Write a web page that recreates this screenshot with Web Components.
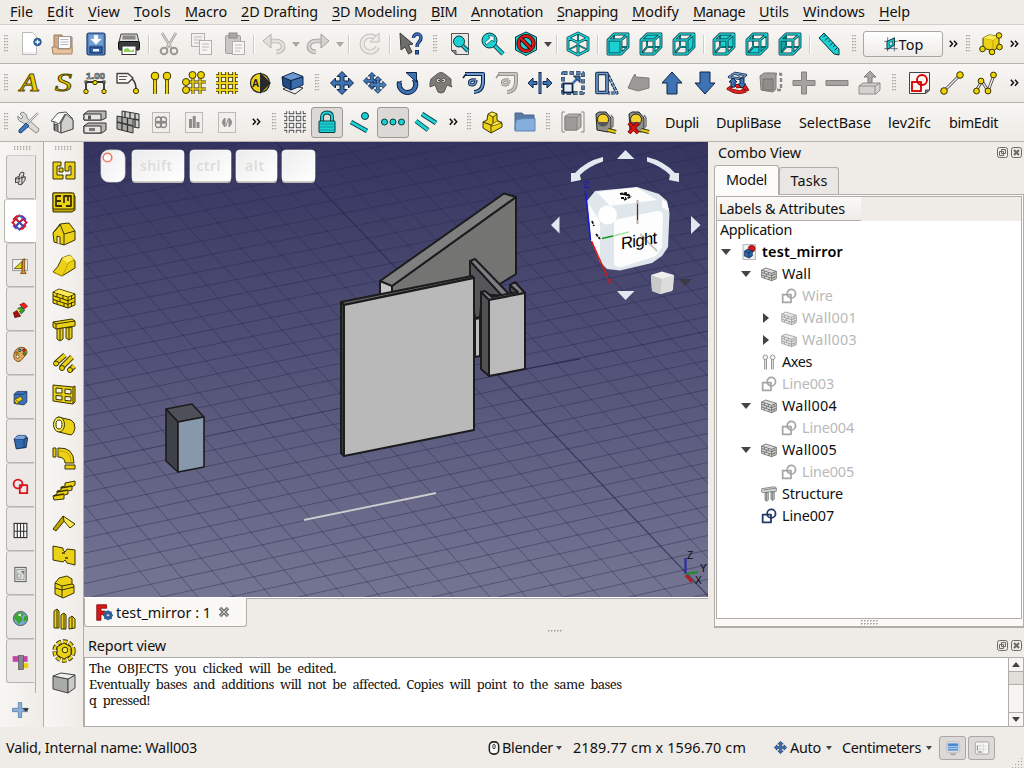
<!DOCTYPE html>
<html lang="en">
<head>
<meta charset="utf-8">
<title>FreeCAD</title>
<style>
html,body{margin:0;padding:0;width:1024px;height:768px;overflow:hidden}
body{font:14.4px "Noto Sans","Open Sans",sans-serif;color:#111;background:#efebe7}
u{text-decoration:underline;text-decoration-thickness:1px;text-underline-offset:3px}
</style>
</head>
<body>
<fc-window>
  <fc-menubar slot="menu">
    <fc-text w="23"><u>F</u>ile</fc-text><fc-text w="27"><u>E</u>dit</fc-text><fc-text w="32"><u>V</u>iew</fc-text><fc-text w="37"><u>T</u>ools</fc-text><fc-text w="42"><u>M</u>acro</fc-text><fc-text w="77"><u>2</u>D Drafting</fc-text><fc-text w="85"><u>3</u>D Modeling</fc-text><fc-text w="26"><u>B</u>IM</fc-text><fc-text w="72"><u>A</u>nnotation</fc-text><fc-text w="61"><u>S</u>napping</fc-text><fc-text w="47"><u>M</u>odify</fc-text><fc-text w="52"><u>M</u>anage</fc-text><fc-text w="30"><u>U</u>tils</fc-text><fc-text w="62"><u>W</u>indows</fc-text><fc-text w="31"><u>H</u>elp</fc-text>
  </fc-menubar>
  <fc-toolbar slot="tools">
    <fc-grip w="13"></fc-grip><fc-tool i="new"></fc-tool><fc-tool i="open"></fc-tool><fc-tool i="save"></fc-tool><fc-tool i="print"></fc-tool><fc-sep w="7"></fc-sep><fc-tool i="cut"></fc-tool><fc-tool i="copy"></fc-tool><fc-tool i="paste"></fc-tool><fc-sep w="6"></fc-sep><fc-tool i="undo"></fc-tool><fc-drop w="11" c="#aaa8a5"></fc-drop><fc-tool i="redo"></fc-tool><fc-drop w="11" c="#aaa8a5"></fc-drop><fc-sep w="8"></fc-sep><fc-tool i="refresh"></fc-tool><fc-sep w="8"></fc-sep><fc-tool i="whats"></fc-tool><fc-grip w="16"></fc-grip><fc-tool i="fit"></fc-tool><fc-tool i="zoomsel"></fc-tool><fc-tool i="nodraw"></fc-tool><fc-drop w="11" c="#444"></fc-drop><fc-sep w="8"></fc-sep><fc-tool i="iso"></fc-tool><fc-sep w="7"></fc-sep><fc-tool i="vfront"></fc-tool><fc-tool i="vtop"></fc-tool><fc-tool i="vright"></fc-tool><fc-sep w="7"></fc-sep><fc-tool i="vrear"></fc-tool><fc-tool i="vbottom"></fc-tool><fc-tool i="vleft"></fc-tool><fc-sep w="7"></fc-sep><fc-tool i="ruler"></fc-tool><fc-grip w="17"></fc-grip><fc-button><fc-icon i="plane" s="16"></fc-icon><fc-text w="25">Top</fc-text></fc-button><fc-more w="20"></fc-more><fc-grip w="11"></fc-grip><fc-tool i="ycube"></fc-tool><fc-more w="14"></fc-more>
  </fc-toolbar>
  <fc-toolbar slot="tools">
    <fc-grip w="12"></fc-grip><fc-tool i="text"></fc-tool><fc-tool i="shapes"></fc-tool><fc-tool i="dim"></fc-tool><fc-tool i="leader"></fc-tool><fc-tool i="axes"></fc-tool><fc-tool i="axsys"></fc-tool><fc-tool i="ygrid"></fc-tool><fc-tool i="section"></fc-tool><fc-tool i="layer"></fc-tool><fc-grip w="16"></fc-grip><fc-tool i="move"></fc-tool><fc-tool i="copymove"></fc-tool><fc-tool i="rotate"></fc-tool><fc-tool i="sheep"></fc-tool><fc-tool i="offset"></fc-tool><fc-tool i="offset2"></fc-tool><fc-tool i="trimex"></fc-tool><fc-tool i="scale"></fc-tool><fc-tool i="stretch"></fc-tool><fc-tool i="blob"></fc-tool><fc-tool i="up"></fc-tool><fc-tool i="down"></fc-tool><fc-tool i="draft2sk"></fc-tool><fc-tool i="compound"></fc-tool><fc-tool i="plus"></fc-tool><fc-tool i="minus"></fc-tool><fc-tool i="extrude"></fc-tool><fc-grip w="16"></fc-grip><fc-tool i="sketch"></fc-tool><fc-tool i="line"></fc-tool><fc-tool i="wire"></fc-tool><fc-more w="26"></fc-more>
  </fc-toolbar>
  <fc-toolbar slot="tools">
    <fc-grip w="12"></fc-grip><fc-tool i="wrench"></fc-tool><fc-tool i="house"></fc-tool><fc-tool i="levels"></fc-tool><fc-tool i="windows"></fc-tool><fc-tool i="doc1"></fc-tool><fc-tool i="doc2"></fc-tool><fc-tool i="doc3"></fc-tool><fc-more w="27"></fc-more><fc-grip w="8"></fc-grip><fc-tool i="ggrid"></fc-tool><fc-tool i="lock" on></fc-tool><fc-tool i="snapnear"></fc-tool><fc-tool i="snapext" on></fc-tool><fc-tool i="snappar"></fc-tool><fc-more w="21"></fc-more><fc-grip w="11"></fc-grip><fc-tool i="lparts"></fc-tool><fc-tool i="folder"></fc-tool><fc-grip w="15"></fc-grip><fc-tool i="selbox"></fc-tool><fc-tool i="tape"></fc-tool><fc-tool i="tapex"></fc-tool><fc-space w="10"></fc-space><fc-text w="34">Dupli</fc-text><fc-space w="17"></fc-space><fc-text w="65">DupliBase</fc-text><fc-space w="18"></fc-space><fc-text w="72">SelectBase</fc-text><fc-space w="17"></fc-space><fc-text w="43">lev2ifc</fc-text><fc-space w="18"></fc-space><fc-text w="49">bimEdit</fc-text>
  </fc-toolbar>
  <fc-workbenches slot="left">
    <fc-wtab i="ww"></fc-wtab><fc-wtab i="wbim" on></fc-wtab><fc-wtab i="wdraft"></fc-wtab><fc-wtab i="wimg"></fc-wtab><fc-wtab i="wpal"></fc-wtab><fc-wtab i="wpart"></fc-wtab><fc-wtab i="wpd"></fc-wtab><fc-wtab i="wsk"></fc-wtab><fc-wtab i="wss"></fc-wtab><fc-wtab i="wtd"></fc-wtab><fc-wtab i="wweb"></fc-wtab><fc-wtab i="wclip"></fc-wtab>
  </fc-workbenches>
  <fc-vtoolbar slot="left">
    <fc-icon i="a1"></fc-icon><fc-icon i="a2"></fc-icon><fc-icon i="a3"></fc-icon><fc-icon i="a4"></fc-icon><fc-icon i="a5"></fc-icon><fc-icon i="a6"></fc-icon><fc-icon i="a7"></fc-icon><fc-icon i="a8"></fc-icon><fc-icon i="a9"></fc-icon><fc-icon i="a10"></fc-icon><fc-icon i="a11"></fc-icon><fc-icon i="a12"></fc-icon><fc-icon i="a13"></fc-icon><fc-icon i="a14"></fc-icon><fc-icon i="a15"></fc-icon><fc-icon i="a16"></fc-icon><fc-icon i="a17"></fc-icon>
  </fc-vtoolbar>
  <fc-viewport slot="view"></fc-viewport>
  <fc-doctabs slot="view"><fc-icon i="app" s="17"></fc-icon><fc-text w="95">test_mirror : 1</fc-text><fc-icon i="x" s="12"></fc-icon></fc-doctabs>
  <fc-combo slot="combo">
    <fc-row ind="4" style="height:21px;top:0"><fc-text w="72">Application</fc-text></fc-row>
    <fc-row ind="4" arrow="down" i="tdoc" bold><fc-text w="81">test_mirror</fc-text></fc-row>
    <fc-row ind="24" arrow="down" i="twall"><fc-text w="29">Wall</fc-text></fc-row>
    <fc-row ind="44" i="twire" dim><fc-text w="31">Wire</fc-text></fc-row>
    <fc-row ind="44" arrow="right" i="twall" dim><fc-text w="55">Wall001</fc-text></fc-row>
    <fc-row ind="44" arrow="right" i="twall" dim><fc-text w="55">Wall003</fc-text></fc-row>
    <fc-row ind="24" i="taxes"><fc-text w="30">Axes</fc-text></fc-row>
    <fc-row ind="24" i="twire" dim><fc-text w="52">Line003</fc-text></fc-row>
    <fc-row ind="24" arrow="down" i="twall"><fc-text w="55">Wall004</fc-text></fc-row>
    <fc-row ind="44" i="twire" dim><fc-text w="52">Line004</fc-text></fc-row>
    <fc-row ind="24" arrow="down" i="twall"><fc-text w="55">Wall005</fc-text></fc-row>
    <fc-row ind="44" i="twire" dim><fc-text w="52">Line005</fc-text></fc-row>
    <fc-row ind="24" i="tstruct"><fc-text w="61">Structure</fc-text></fc-row>
    <fc-row ind="24" i="twireb"><fc-text w="52">Line007</fc-text></fc-row>
  </fc-combo>
  <fc-report slot="report">
    <fc-text w="247">The OBJECTS you clicked will be edited.</fc-text>
    <fc-text w="532">Eventually bases and additions will not be affected. Copies will point to the same bases</fc-text>
    <fc-text w="61">q pressed!</fc-text>
  </fc-report>
  <fc-status slot="status">
    <fc-text w="191">Valid, Internal name: Wall003</fc-text><fc-space w="290"></fc-space><fc-icon i="mouse" s="14"></fc-icon><fc-space w="1"></fc-space><fc-text w="51">Blender</fc-text><fc-drop w="12" c="#444" small></fc-drop><fc-space w="8"></fc-space><fc-text w="173">2189.77 cm x 1596.70 cm</fc-text><fc-space w="28"></fc-space><fc-icon i="move" s="13"></fc-icon><fc-space w="3"></fc-space><fc-text w="31">Auto</fc-text><fc-drop w="16" c="#444" small></fc-drop><fc-space w="5"></fc-space><fc-text w="79">Centimeters</fc-text><fc-drop w="16" c="#444" small></fc-drop><fc-space w="2"></fc-space><fc-sbtn i="sb1"></fc-sbtn><fc-sbtn i="sb2"></fc-sbtn>
  </fc-status>
</fc-window>
<script>
/* ---------- icon library (24 x 24 grid) ---------- */
const P=(d,f='none',s='none',w=1,x='')=>`<path d="${d}" fill="${f}" stroke="${s}" stroke-width="${w}" stroke-linejoin="round" ${x}/>`;
const C=(x,y,r,f='#edd400',s='#3a3300',w=1)=>`<circle cx="${x}" cy="${y}" r="${r}" fill="${f}" stroke="${s}" stroke-width="${w}"/>`;
const R=(x,y,w,h,f,s='none',k=1,rx=0)=>`<rect x="${x}" y="${y}" width="${w}" height="${h}" rx="${rx}" fill="${f}" stroke="${s}" stroke-width="${k}"/>`;
const T=(x,y,t,z,st,l)=>`<text x="${x}" y="${y}" font-size="${z}" style="${st}"${l?` textLength="${l}" lengthAdjust="spacingAndGlyphs"`:''}>${t}</text>`;
const Y='#ecd217',YL='#fcea55',YD='#c0a400',K='#3a3300',TE='#1cd0d4',TK='#08363a',B='#3d72b4',BK='#0e2546';
const rod=(d,o,i,a=3.6,b=1.8)=>P(d,'none',o,a)+P(d,'none',i,b);
const near='M2 8H15V22H2ZM2 8 8 2H22V15L15 22M15 8 22 2',far='M8 2V15H22M8 15 2 22';
const rodN=rod(near,TK,TE,2.8,1.3),rodF=rod(far,TK,TE,2,.8);
const vn=f=>rodF+f+rodN, vf=f=>f+rodF+rodN;
const arrows='M12 .5 17 5.500H14V10H18.500V7L23.500 12 18.500 17V14H14V18.500H17L12 23.500 7 18.500H10V14H5.500V17L.5 12 5.500 7V10H10V5.500H7Z';
const doc=(g)=>R(3.5,2.5,17,20,'#f1efec','#bdbab6')+g;
const wall=(f,k)=>P('M1 6 7 3 23 8V19L16 22 1 17Z',f,k)+P('M1 6 16 11 23 8M16 11V22M1 9.700 16 14.700 23 11.700M1 13.400 16 18.400 23 15.400M5 7.500V11M11 9.500V13M8 12.200V15.600M5 15V18M12 17V20.500M19.500 10V13M19.500 16V20','none',k);
const tape='<g>'+P('M2 4 5 2H12L17 8V20L14 22 3 20Z','#8d8f8b','#222')+C(9,9.5,5.5,'#f2d22b','#222')+P('M3.600 12A5.500 5.500 0 0 0 14.400 12Z','#555')+P('M17 5 19 8V16L17 18','none','#777',1.5)+rod('M14 20 22 22','#3a3300','#ecd217',4,2)+'</g>';
const wsk=(k,w=2)=>P('M2.500 10H15V21.500H2.500Z','none',k,w)+`<circle cx="15.500" cy="8.500" r="6.300" fill="none" stroke="${k}" stroke-width="${w}"/>`;
const I={
new:P('M4.500 .5H14.500L18.500 4.500V22.500H4.500Z','#fff','#bcbab8')+P('M5 20H18V22H5Z','#eee')+C(19.500,10,3.700,'#2f66a8','#244c80')+P('M19.500 7.700V12.300M17.200 10H21.800','none','#fff',1.300),
open:P('M3 3H11L12 5H21V20H3Z','#d2a982','#a27a52')+R(7.500,4.500,12,12,'#fafafa','#999')+P('M9.500 7.500H17.500M9.500 10H17.500M9.500 12.500H17.500','none','#bbb')+P('M1 15H5L7 17H19V15H21V22H2Z','#e6c4a0','#a98560'),
save:R(3,1,18,22,'#5587c8','#1f3f70',1.200,2)+R(6,15,12,6,'#3264a6','#16315c')+R(9,17,6,2.500,'#e8eef6')+R(5,3,14,10,'#729fcf')+P('M10 3H14V7H17.500L12 12.500 6.500 7H10Z','#fff','#c8d8ec',.5),
print:P('M4 2H20L22 10H2Z','#ddd','#444')+R(5.500,3.500,13,4,'#888')+R(1.500,9.500,21,8.500,'#3a3c3d','#111',1,1.500)+R(5,14,14,8.500,'#fff','#333')+P('M7 17 11 16 14 19 17 17V20H7Z','#8bd15c'),
cut:P('M5 1 14.500 16.500M19 1 9.500 16.500','none','#a5a3a0',2.600)+P('M5 1 14.500 16.500M19 1 9.500 16.500','none','#dedcd9',1)+C(7,19,3.300,'none','#9a9895',2)+C(17,19,3.300,'none','#9a9895',2),
copy:R(1.500,1.500,13,13,'#f3f1ef','#b3b1ae')+P('M4 5H12M4 8H12M4 11H10','none','#bbb')+R(9.500,8.500,12,14,'#f6f5f3','#b3b1ae')+P('M12 12H19M12 15H19M12 18H17','none','#bbb'),
paste:R(2.500,3.500,15,18,'#c9c7c4','#a3a19e',1,1)+R(6,1,8,5,'#aaa8a5','#8e8c89')+R(9.500,9.500,12,13,'#f6f5f3','#b3b1ae')+P('M12 13H19M12 16H19M12 19H17','none','#bbb'),
undo:rod('M14 20C24 20 23 9 14 9H7','#b5b3b0','#e3e1de',4.600,2.800)+P('M1 9 9 2V16Z','#e3e1de','#b5b3b0'),
redo:rod('M10 20C0 20 1 9 10 9H17','#a3a19e','#d4d2cf',4.600,2.800)+P('M23 9 15 2V16Z','#d4d2cf','#a3a19e'),
refresh:rod('M18 6.500A8 8 0 1 0 19.500 15','#c0bebb','#eceae7',5,3)+P('M21 1V10H12Z','#eceae7','#c0bebb'),
whats:P('M1 1 14 12 9.500 13 13 20 9.500 22 6 15 2 18Z','#6d6f6b','#3c3e3b')+P('M14.500 6C14.500 .5 22.500 1 22 6 21.700 10 18 9.500 18 15','none','#14306a',3.400)+P('M14.500 6C14.500 .5 22.500 1 22 6 21.700 10 18 9.500 18 15','none','#4a7cc2',1.400)+R(16.500,18.500,3,3.500,'#3465a4','#14306a'),
fit:P('M3.500 1.500H20.500V22.500H8L3.500 18.500Z','#e9e8e5','#555')+P('M3.500 18.500H8V22.500Z','#999','#555')+rod('M14 13 20 19',TK,TE,4,2.200)+C(11,9.500,5.500,TE,TK),
zoomsel:rod('M13 13 22 22',TK,TE,4.400,2.600)+C(8.500,8.500,7.500,TE,TK)+P('M5 13 4 10 9 6 7 4 13 4V10L11 8Z','#eafafa',TK,.6),
nodraw:P('M12 0 22.500 5V18L12 23.500 1.500 18V5Z',TE,TK)+C(12,11.500,7.500,'none','#3a0000',4.200)+C(12,11.500,7.500,'none','#d81b1b',2.600)+P('M7 6.500 17 16.500','none','#3a0000',4)+P('M6.500 6 17.500 17','none','#d81b1b',2.400),
iso:rod('M12 13V2M2 18 12 13 22 18',TK,TE,1.800,.7)+rod('M12 1 22 6V18L12 23 2 18V6ZM2 6 12 10.500 22 6M12 10.500V23',TK,TE,2.800,1.400),
vfront:vn(R(2,8,13,14,TE)),vtop:vn(P('M2 8 8 2H22L15 8Z',TE)),vright:vn(P('M15 8 22 2V15L15 22Z',TE)),vrear:vf(R(8,2,14,13,TE)),vbottom:vf(P('M2 22 8 15H22L15 22Z',TE)),vleft:vf(P('M2 8 8 2V15L2 22Z','#0fa5aa')),
ruler:P('M1 6 6 1 21 17 21 23 16 22Z',TE,TK)+P('M7.500 3 5.500 5M10 5.500 7 8.500M12.500 8 10.500 10M15 10.500 12 13.500M17 13 15 15M19.500 15.500 16.500 18.500','none',TK),
plane:P('M7 2V23M17 2V23M2 8H22M2 19H22','none','#456',1.200)+P('M6 8 17 3V14L6 20Z',TE,TK,1.500)+P('M9.500 10 14 8V13L9.500 15Z','#efefef',TK,1),
ycube:P('M4 6 10 3 20 4V15L14 19 4 16Z',Y,K)+P('M4 6 14 8 20 4M14 8V19','none',YD)+P('M4 6 10 3 20 4 14 8Z',YL)+C(20,3.500,2.800)+C(3.500,17,2.800)+C(13,20,2.800)+C(20.500,15,2.800),
text:T(3,20,'A',25,'font-family:Liberation Serif;font-style:italic;font-weight:bold;fill:#edd400;stroke:#5a4b00;stroke-width:.9px',20),
shapes:T(5,20,'S',26,'font-family:Liberation Serif;font-style:italic;fill:#edd400;stroke:#5a4b00;stroke-width:1px',17),
dim:T(3,7.500,'1.00',9,'font-family:Liberation Sans;font-weight:bold;fill:#ddd;stroke:#333;stroke-width:.6px',19)+P('M3 20V11H21V20M3 11H21','none','#333',1.800)+C(3,20.500,2.200)+C(12,11.500,2.200)+C(21,20.500,2.200)+R(2,10,2,2,'#ccc','#333')+R(20,10,2,2,'#ccc','#333'),
leader:P('M1 2.500H12L17 7 12 12H1Z','#f6f5f2','#444',1.400)+P('M3 5.500H11M3 8.500H10','none','#555',1.200)+P('M16 8Q20 11 20 18','none','#333',1.500)+C(20,20,2.600),
axes:rod('M6 6V23M18 6V23',K,Y,4,2.400)+C(6,5,3.800)+C(18,5,3.800),
axsys:rod('M11 6V23M18 6V23M5 11H24M5 18H24',K,Y,3,1.600)+C(10.500,4,3.500)+C(19,4,3.500)+C(4,11,3.500)+C(4,19,3.500),
ygrid:rod('M5 1V23M12 1V23M19 1V23M1 5H23M1 12H23M1 19H23',K,Y,3.600,2),
section:C(12,12,9.500,Y,'#222',1.200)+P('M12 1 23 12 12 23Z','#2a2a2a')+T(4,15.500,'A',10,'font-family:Liberation Sans;font-weight:bold;fill:#222'),
layer:P('M2 18 10 14 22 17 14 23Z','#eee','#333')+P('M1 6 10 9.500V19L2 15Z','#214b82',BK)+P('M10 9.500 22 5.500V14L10 19Z','#3a6cae',BK)+P('M1 6 12 1.500 22 5.500 10 9.500Z','#6d9ad2',BK),
move:P(arrows,B,BK),
copymove:`<g transform="translate(0 1) scale(.74)">${P(arrows,B,BK)}</g><g transform="translate(6 5) scale(.74)">${P(arrows,'#4b7ec0',BK)}</g>`,
rotate:rod('M3.500 11A8.300 8.300 0 1 0 18 8',BK,B,5,3)+P('M10 1.500H20.500V11Z',B,BK)+P('M1 12 6 10','none',BK),
sheep:P('M7 4Q12 -1 17 4L22 8V14L23 16 18 14 15 21Q12 23 9 21L6 14 1 16V12L2 8Z','#7d7b78','#5c5a58')+C(9.500,9.500,2.200,'#eee','#555')+C(14.500,9.500,2.200,'#eee','#555')+C(10,9.500,.6,'#222')+C(14,9.500,.6,'#222'),
offset:rod('M3 3H21V12Q20 21 12 21',BK,'#6b99d2',4,2)+rod('M14 9Q6 8 8 13.500 14 15 14 9',BK,'#6b99d2',3.200,1.400)+P('M1 7 4 3','none',BK,1.500),
offset2:rod('M3 3H21V12Q20 21 12 21','#96938f','#c9c6c2',4,2)+rod('M14 9Q6 8 8 13.500 14 15 14 9','#96938f','#c9c6c2',3.200,1.400)+P('M1 7 4 3','none','#96938f',1.500),
trimex:P('M12 1V23','none',BK,3)+P('M12 2V22','none','#5c8cc8',1.200)+P('M0 12 5 7V10.500H9V13.500H5V17ZM24 12 19 7V10.500H15V13.500H19V17Z',B,BK),
scale:P('M2 2H22V22H2Z','none',BK,3.400,'stroke-dasharray="4.500 2"')+P('M2 2H22V22H2Z','none','#729fcf',1.400,'stroke-dasharray="4 2.500"')+R(2.500,12.500,9,9,'#e8eef6',BK,1.800)+P('M12 12 16 8','none',B,2.500)+P('M12.500 5H19V11.500Z',B,BK),
stretch:P('M14 4 23 22H14','none',BK,3.200,'stroke-dasharray="3.500 1"')+P('M14 4 23 22H14','none','#729fcf',1.400,'stroke-dasharray="3.500 1"')+P('M3 2.500H13V21.500H3Z','none',BK,3.600)+P('M3 2.500H13V21.500H3Z','none','#729fcf',1.600),
blob:P('M6 6 8 3 9 6 22 7 22 17 11 20 1 17Z','#9b9995','#7f7d7a'),
up:P('M12 1 22 12H17V23H7V12H2Z',B,BK),down:P('M12 23 22 12H17V1H7V12H2Z',B,BK),
draft2sk:rod('M3 6 9 2 20 4 15 8ZM4 6Q8 0 14 5',BK,'#729fcf',2.400,1.200)+rod('M2 18 8 14 20 16 15 21ZM10 16Q20 14 22 20M3 18Q12 24 20 20',"#5c0000",'#e02020',2.800,1.600)+P('M5 16V11H3L7 7 11 11H9V16ZM14 7V13H12L16 17 20 13H18V7Z',B,BK),
compound:P('M8 3H22V19H8Z','none','#8a8885',2.400,'stroke-dasharray="4 2"')+P('M1 5 5 2H16L17 4V18L14 21 2 19Z','#a19f9b','#7e7c79')+R(4,8,10,11,'#8f8d89','#747270'),
plus:P('M9.500 1H14.500V9.500H23V14.500H14.500V23H9.500V14.500H1V9.500H9.500Z','#a5a3a0','#83817e'),minus:P('M1 9.500H23V14.500H1Z','#a5a3a0','#83817e'),
extrude:P('M12 0 18 6H14V12H10V6H6Z','#aaa8a5','#7f7d7a')+P('M1 15 5 12H22L22 19 18 23H1Z','#d4d2cf','#908e8b')+P('M1 15H17L22 12M17 15V23','none','#908e8b'),
sketch:P('M2.500 1.500H22.500V19L18.500 22.500H2.500Z','#f8f7f5','#444')+P('M18.500 22.500V19H22.500Z','#888','#444')+R(5,11,9,9,'none','#d40000',1.800)+C(15,9,5,'none','#d40000',1.800),
line:rod('M4 20 20 4','#444','#eee',3,1.400)+C(4,20,3.300)+C(20,4,3.300),
wire:rod('M3 20 9 10 15 20 21 4','#444','#eee',3,1.400)+C(3.500,20,2.900)+C(8,10,2.900)+C(15,20,2.900)+C(20.500,4,2.900),
wrench:P('M5 2 3 4 6 7 4 9 1 6Q0 11 5 12L19 23Q22 22 22 19L10 8Q10 3 5 2Z','#d8dad7','#888',1)+rod('M21 3 10 14','#999','#eee',2.400,1)+P('M9 13 12 16 4 23Q1 23 2 20Z','#3f77bd','#1e4478'),
house:P('M2 11 4 10V20L11 23V12Z','#ececea','#555')+P('M11 13 16 3 23 10V19L11 23Z','#c6c7c2','#555')+P('M1 11 8 3 16 2 23 9 21 10 15 4 9 14 5 12Z','#f8f8f6','#555')+P('M11 13V23L23 19V10L16 4Z','#cfd0cb','#555')+P('M4.500 21V14L8 15V22','#888','#444'),
levels:P('M1 4 5 1H23V8L19 10H1Z','#b6b7b2','#333')+P('M1 4H18V10H1Z','#e6e6e3','#333')+P('M1 16 5 13H23V20L19 23H1Z','#b6b7b2','#333')+P('M1 16H18V23H1Z','#e6e6e3','#333')+R(5,5.500,3,4,'#555')+R(6,18,6,3,'#777'),
windows:P('M6 1 23 4V18L6 15Z','#d0d1cd','#333')+P('M1 6 17 9V23L1 19Z','#a9aaa6','#333')+P('M6 7V20M11.500 8V22M1 12 17 16M9 2V7M14 3V9M19 4V17M17 9 23 10','none','#333',1.300),
doc1:doc(C(9.500,10,3,'none','#8a8886',1.300)+C(14.500,10,3,'none','#8a8886',1.300)+C(9.500,14.500,3,'none','#8a8886',1.300)+C(14.500,14.500,3,'none','#8a8886',1.300)),
doc2:doc(R(7,9,3,9,'#8f8d8a')+R(10.700,6,3,12,'#8f8d8a')+R(14.500,12,3,6,'#8f8d8a')),
doc3:doc(P('M10 8Q5 12 10 17ZM14 8Q19 12 14 17Z','#8f8d8a','#8f8d8a')+P('M11 16 13 9','none','#8f8d8a')),
ggrid:rod('M5 1V23M12 1V23M19 1V23M1 5H23M1 12H23M1 19H23','#444','#fff',3.300,1.500),
lock:P('M7 12V7Q7 2.500 12 2.500T17 7V12','none',TK,3.800)+P('M7 12V7Q7 2.500 12 2.500T17 7V12','none',TE,2)+R(4,11,16,11.500,TE,TK,1,.5)+P('M5 14H19M5 17H19M5 20H19','none','#0c9a9f'),
snapnear:rod('M2 12 18 21',TK,TE,4.400,2.700)+C(16,6,3.500,TE,TK),
snapext:C(3.500,12,3,TE,TK)+C(12,12,3,TE,TK)+C(20.500,12,3,TE,TK),
snappar:rod('M1 11 13 20M7 4 21 13',TK,TE,4.600,2.900),
lparts:P('M3 12 7 10 8 4 12 2 17 4V10L22 13V17L11 23 3 18Z',Y,K)+P('M3 12 11 15 22 12M11 15V23M8 4 13 7 17 4M13 7V14','none',K)+P('M8 4 12 2 17 4 13 7ZM12 14 17 11 22 13 12 16Z',YL,K,.6),
folder:P('M2 3H9L11 5H21V20H2Z','#5b7ba5','#4b688f')+P('M3 10Q8 8 22 8.500V21H2Z','#86aedd','#5a83b7'),
selbox:P('M4 2H1V22H4M20 2H23V22H20','none','#888',1)+P('M4 6 8 4H20V17L16 20H4Z','#b0afac','#85837f')+P('M4 7H16V20H4Z','#9c9b98','#85837f')+P('M16 7 20 4','none','#85837f'),
tape:tape,tapex:tape+P('M2 13 11 23M11 13 2 23','none','#5a0000',4)+P('M2 13 11 23M11 13 2 23','none','#e01010',2.600),
ww:P('M5 11 10 9 11 5 14 3 17 4 16 9 19 10 18 15 13 21 9 20 9 17 5 18Z','#d8d8d6','#333',1.300)+P('M10 9V17M14 8V20M5 13 18 10','none','#333',1.200),
wbim:`<g fill="none" stroke-width="2.600"><path d="M12 2 17 7 12 12 7 7Z" stroke="#29b"/><path d="M17 7 22 12 17 17 12 12Z" stroke="#c14"/><path d="M7 7 12 12 7 17 2 12Z" stroke="#d12"/><path d="M12 12 17 17 12 22 7 17Z" stroke="#35b"/><path d="M3 8 8 3H12M21 16 16 21H12" stroke="#d12"/><path d="M21 8 16 3H13M3 16 8 21" stroke="#63b"/></g>`,
wdraft:R(1,2,21,16,'#f1f1ee','#777')+P('M3 15 14 5V15Z','#edd400','#333')+P('M15 2 18 1 18 19 20 22H12L14 19Z','#d98f35','#5c3500'),
wimg:P('M11 4 17 1 22 6 17 10Z','#e22','#700')+P('M8 9 14 7 18 12 13 17Z','#3a9a30','#153')+P('M2 15 7 12 12 20 4 22Z','#a11','#400')+P('M8 12 11 11','none','#edd400',3),
wpal:P('M12 2C20 1 23 8 20 12S17 15 14 19 5 23 3 17 5 3 12 2Z','#e7a85d','#5d3a10',1.200)+C(8,15,2.300,'#f5f3f0','#5d3a10')+C(11,6,2,'#39f')+C(17,6,2,'#d22')+C(17.500,11,2,'#3a3')+C(7,10,1.700,'#edd400'),
wpart:P('M3 6 7 2H21V17L17 21 3 19Z','#3b71b5','#142b4c')+P('M3 6H16L21 2','none','#142b4c')+P('M3 14 12 9 15 13 6 20Z','#edd400','#333')+P('M6 14 9 17','none','#333'),
wpd:P('M3 7 8 2H19L22 6 20 19 6 21Z','#346aad','#142b4c',1.300)+P('M3 7H17L22 6M17 7V20','none','#142b4c')+P('M3 7 8 2H19L17 7Z','#7ba5d8'),
wsk:`<g transform="matrix(-1 0 0 1 24 0)">${P('M2.500 10H13V21.500H2.500Z','none','#dd1020',2.500)}<circle cx="15.500" cy="8.500" r="6.300" fill="none" stroke="#dd1020" stroke-width="2.500"/></g>`,
wss:R(3,2,18,20,'#fff','#333',1.600)+P('M7.500 2V22M12 2V22M16.500 2V22M3 13H21','none','#333',1.600),
wtd:R(4,2,16,20,'#dfe1de','#666',1.500)+R(7,5,10,14,'none','#888')+C(10,14,3,'none','#888')+P('M13 8H16V11','none','#777',2),
wweb:C(12,12,10,'#77a8cf','#444',1.200)+P('M4 7Q12 0 17 6L13 10 15 14 9 20Q7 14 3 13ZM17 9 21 8 21 14 16 17Z','#3da52c')+P('M8 7 13 5 12 9Z','#fff'),
wclip:R(1,3,21,8,'#c83fb0')+R(12,13,11,7,'#edd400')+R(9,2,7,20,'#85888b','#555'),
wplus:P('M10 3H14V10H21V14H14V21H10V14H3V10H10Z','#8aaed6','#5d82ab')+P('M15 10H23L19 14Z','#333'),
a1:P('M1 4H9V8H5V17H11V21H1ZM7 10H11V14H7ZM13 4H23V21H14V17H19V8H17V13H13Z',Y,K),
a2:P('M1 3H20L23 6V20L20 22H1Z',YD,K)+P('M1 3H22V19H1Z',Y,K)+P('M9 6H4V16H10M4 11H9M12 13V6H19V16H14M16 6V11','none',K,1.800),
a3:P('M1 11 8 2 17 1 23 9V18L12 23 2 20Z',Y,K)+P('M8 2 12 12V23M12 12 23 9M1 11 8 3','none',K)+P('M5 21V14L8 15V22','#f6f2d0',K),
a4:P('M1 18Q6 14 10 4L18 1 23 7V14L10 22Z',Y,K)+P('M1 18 10 22Q14 16 16 9L23 6','none',YD)+P('M10 4 18 1 22 5 15 9Z',YL),
a5:wall(Y,K)+P('M2 6 7 3.500 22 8 16 10.500Z',YL),
a6:P('M1 4 20 1 23 3V8L4 11 1 9Z',Y,K)+P('M4 6 23 3M4 6V11M1 4 4 6','none',K)+P('M5 11 11 10V21L8 23 5 21ZM14 10 20 9V20L17 22 14 20Z',Y,K)+P('M8 11V22M17 10V21','none',K),
a7:rod('M4 13 13 5M9 18 20 7M18 20 22 16',K,Y,5.400,3.600)+C(4,13.500,2.500)+C(10,18,2.500)+C(18,20,2.500),
a8:P('M1 3 21 5 23 4V20L21 22 1 19Z',Y,K)+P('M4 6 10 6.500V11H4ZM13 7 19 7.500V12L13 11.500ZM4 13.500 10 14V18L4 17.500ZM13 14.500 19 15V19L13 18.500Z','#f5f1df',K)+P('M21 5V22','none',K),
a9:P('M6 3 19 6Q23 8 23 14 22 20 19 21L7 18Z',Y,K)+`<ellipse cx="7" cy="10.500" rx="5.500" ry="7.500" fill="${YL}" stroke="${K}"/><ellipse cx="7" cy="10.500" rx="3" ry="4.500" fill="#fff" stroke="${K}"/>`,
a10:P('M1 2H4V11H1ZM6 2Q22 1 22 17H13Q13 11 6 11ZM13 19H23V23H13Z',Y,K)+P('M6 5Q19 4 19 16','none',YD),
a11:P('M13 4 23 2V6L20 8V11L16 12V15L12 16V20L2 21 1 17 5 15V12L9 11V8L13 7Z',Y,K)+P('M1 17 12 15M5 13 16 11M9 9 20 7','none',K,1.300),
a12:P('M1 18 11 5 13 9 4 20Z',YD,K)+P('M11 5 23 13 18 17 12 10Z',YL,K),
a13:P('M1 3 11 5V7L13 9 15 6 23 7V22L15 20 13 17 11 19 1 17Z',Y,K)+P('M10 10H13M13 15H16','none',K,1.500),
a14:P('M3 8 7 3 15 1 20 4V9L22 10V18L11 23 3 19Z',Y,K)+P('M3 8 10 11 20 9M10 11V15L22 12M3 13 10 15V22','none',K),
a15:P('M2 4 5 2 7 4V21H2ZM9 8 12 6 14 8V22H9ZM17 11 20 9 23 12V21L17 22Z',Y,K)+P('M5 3V21M12 7V22M20 10V22','none',K),
a16:`<circle cx="12" cy="12" r="9.500" fill="none" stroke="${K}" stroke-width="4.400" stroke-dasharray="4.400 1.800"/><circle cx="12" cy="12" r="9.500" fill="none" stroke="${Y}" stroke-width="2.600" stroke-dasharray="4 2.200"/>`+P('M5 8 12 4 19 8V16L12 20 5 16Z',Y,K)+C(13,11,2.800,YL),
a17:P('M1 5 16 8V22L1 18Z','#a9aba7','#444')+P('M16 8 23 4V17L16 22Z','#c9cbc7','#444')+P('M1 5 9 2 23 4 16 8Z','#eeefed','#444'),
app:P('M1 1H15V6H7V10H13V15H7V23H1Z','#d81818','#6e0000')+C(17,16,4.500,'none','#2f5f9c',3.600)+P('M17 9V23M10 16H24M12 11 22 21M22 11 12 21','none','#2f5f9c',2)+C(17,16,2,'#efebe7','#2f5f9c'),
x:P('M4 4 20 20M20 4 4 20','none','#777a76',7)+P('M5 5 19 19M19 5 5 19','none','#c8c8c5',2),
tdoc:R(3,1,19,22,'#eef0f4','#999')+C(16,7,5,'#d41818','#600')+P('M5 11 9 8 17 10V18L12 21 5 18Z','#2f62a8','#142b4c')+P('M5 11 12 13 17 10M12 13V21','none','#142b4c'),
twall:wall('#dcddda','#4c4c4c'),twire:wsk('#75777a',2.600),twireb:wsk('#24386a',2.700),
taxes:rod('M7 7V23M17 7V23','#777','#ddd',4,2)+C(6.500,5,3.500,'#f3f3f3','#888',1.300)+C(17.500,5,3.500,'#f3f3f3','#888',1.300),
tstruct:P('M1 4 20 1 23 3V8L4 10 1 9Z','#d3d5d0','#666')+P('M6 10H11V21L8 23 6 21ZM15 9H20V20L17 22 15 20Z','#bfc2bc','#666')+P('M8 10V22M17 9V21M4 6 23 3','none','#666'),
mouse:R(4,1.500,16,21,'#fafafa','#222',2.600,7)+R(10,6,4,7,'#fff','#222',1.600,2),
sb1:R(2,3,20,15,'#f3f3f1','#aaa',1,2)+R(4,5,16,11,'#4c86cf')+P('M4 10H20M4 13H20','none','#c3daf3',1.400)+P('M7 20H17L15 23H9Z','#aaa'),
sb2:R(2,3,20,18,'#f9f9f7','#888',1,2)+P('M5 9H19M5 14H19M9 5V19M14 5V19','none','#d0d0ce',1.200)+P('M5 8V16M5 18H12','none','#777',1.400)
};
const svg=(n,s)=>`<svg viewBox="0 0 24 24" width="${s}" height="${s}">${I[n]||''}</svg>`;

/* ---------- element helper ---------- */
function define(name,css,html,after){
  customElements.define(name,class extends HTMLElement{
    connectedCallback(){
      if(this.shadowRoot)return;
      const r=this.attachShadow({mode:'open'});
      r.innerHTML=`<style>:host{box-sizing:border-box}svg{display:block}${css}</style>`+(typeof html==='function'?html(this):html);
      if(after)after(this,r);
    }
  });
}
const A=(e,n,d)=>e.getAttribute(n)??d;
const setW=e=>{e.style.width=A(e,'w','8')+'px'};

define('fc-window',`:host{display:flex;flex-direction:column;width:1024px;height:768px}
 .main{display:flex;height:585px}.left{display:flex;width:84px;flex:none}
 .right{flex:1;display:flex;flex-direction:column;min-width:0}.top{display:flex;height:495px}.view{width:624px;flex:none}.combo{flex:1;min-width:0}`,
 `<slot name="menu"></slot><slot name="tools"></slot><div class="main"><div class="left"><slot name="left"></slot></div><div class="right"><div class="top"><div class="view"><slot name="view"></slot></div><div class="combo"><slot name="combo"></slot></div></div><slot name="report"></slot></div></div><slot name="status"></slot>`);
define('fc-menubar',`:host{display:flex;gap:14px;padding:1px 0 0 10px;height:25px;flex:none;line-height:22px;border-bottom:1px solid #d2cfcb;background:#efebe7}`,`<slot></slot>`);
define('fc-toolbar',`:host{display:flex;align-items:center;height:39px;flex:none;background:linear-gradient(#f8f6f3,#edeae5);border-bottom:1px solid #b5b2af}`,`<slot></slot>`);
define('fc-icon',`:host{display:block;flex:none}svg{overflow:visible}`,e=>svg(A(e,'i'),A(e,'s',24)));
define('fc-tool',`:host{display:flex;width:33px;height:31px;flex:none;align-items:center;justify-content:center}svg{overflow:visible}:host([on]){width:32px;margin-right:1px;border:1px solid #9c9996;border-radius:3px;background:#dbd8d5}`,e=>svg(A(e,'i'),24));
define('fc-space',`:host{flex:none}`,'',setW);
define('fc-sep',`:host{display:flex;justify-content:center;height:19px;flex:none}i{width:1px;background:#cfccc8;border-right:1px solid #fff}`,'<i></i>',setW);
define('fc-grip',`:host{display:flex;justify-content:center;height:18px;flex:none}i{width:5px;background:radial-gradient(circle at .7px .7px,#aaa7a3 .8px,transparent .9px) 0 0/2.500px 3px}`,'<i></i>',setW);
define('fc-drop',`:host{display:flex;justify-content:center;flex:none}i{border:4.500px solid transparent;border-top:5px solid var(--c);border-bottom:0}:host([small]) i{border-width:4px 3.500px 0}`,'<i></i>',e=>{setW(e);e.style.setProperty('--c',A(e,'c','#444'))});
define('fc-more',`:host{display:flex;justify-content:center;align-items:center;flex:none}`,`<svg width="9" height="8" viewBox="0 0 9 8"><path d="M.8.800 3.500 3.800.8 6.800M5 .8 7.700 3.800 5 6.800" fill="none" stroke="#111" stroke-width="1.500"/></svg>`,setW);
define('fc-button',`:host{display:flex;width:80px;height:26px;align-items:center;justify-content:center;border:1px solid #aaa7a3;border-radius:3px;background:linear-gradient(#fff,#eeebe7);flex:none}`,`<slot></slot>`);

define('fc-workbenches',`:host{display:flex;flex-direction:column;width:44px;height:585px;background:linear-gradient(90deg,#f8f6f3,#efece8);border-right:1px solid #b0adaa;padding-top:14px}
 .tabs{border-right:1px solid #b0adaa;width:35px;height:538px}.plus{padding:7px 0 0 10px}
 .grip{height:5px;width:17px;margin:-10px 0 4px 14px;background:radial-gradient(circle at .7px .7px,#aaa7a3 .8px,transparent .9px) 0 0/3px 2.500px}`,
 `<div class="grip"></div><div class="tabs"><slot></slot></div><div class="plus">${svg('wplus',20)}</div>`);
define('fc-wtab',`:host{display:flex;width:28px;height:44px;margin-left:6px;align-items:center;justify-content:center;background:#ebe8e5;border:1px solid #b6b3b0;border-right:0;border-top-color:#cfccc9;border-radius:3px 0 0 3px;padding-top:3px}:host([on]){margin-left:4px;width:32px;background:#fff;position:relative;padding-right:2px}`,e=>svg(A(e,'i'),17));
define('fc-vtoolbar',`:host{display:flex;flex-direction:column;align-items:center;gap:8.050px;width:40px;height:585px;box-sizing:border-box;background:linear-gradient(90deg,#f8f6f3,#efece8);border-right:1px solid #b0adaa;padding-top:4px}
 .grip{height:5px;width:17px;margin-bottom:-1px;background:radial-gradient(circle at .7px .7px,#aaa7a3 .8px,transparent .9px) 0 0/3px 2.500px}`,`<div class="grip"></div><slot></slot>`);

/* Ground grid: two nearly parallel families of lines, the axis lines drawn darker */
function grid(){
  let s='';
  for(let k=-15;k<15;k++){
    const top=276+k*33.2, bot=709+k*36.5;
    s+=`<path d="M${top} 142 ${bot} 597" stroke="#26264c" stroke-opacity="${k===0?.7:.42}" stroke-width="${k===0?1.2:1}"/>`;
  }
  for(let k=-24;k<22;k++){
    const l=462+k*15.2, r=331+k*14.6;
    s+=`<path d="M84 ${l} 708 ${r}" stroke="#26264c" stroke-opacity="${k===0?.6:.42}"/>`;
  }
  return s;
}
const poly=(p,f,w=2)=>`<polygon points="${p}" fill="${f}" stroke="#1c1c1e" stroke-width="${w}" stroke-linejoin="round"/>`;
const key=(x,w,t,l)=>`<rect x="${x}" y="151" width="${w}" height="32" rx="3.500" fill="#bcbab6"/><rect x="${x}" y="150" width="${w}" height="31" rx="3.500" fill="url(#k)" stroke="#fff" stroke-width=".6"/>`+(t?`<text x="${x+w/2-l/2-2}" y="171" font-size="14" font-weight="600" fill="#dcdcda" font-family="Open Sans,Noto Sans,sans-serif" textLength="${l}">${t}</text>`:'');
define('fc-viewport',`:host{display:block;height:455px}`,()=>`<svg width="624" height="455" viewBox="84 142 624 455">
<defs><linearGradient id="g" x2="0" y2="1"><stop offset="0" stop-color="#34345f"/><stop offset=".5" stop-color="#535379"/><stop offset="1" stop-color="#757593"/></linearGradient><linearGradient id="k" x2="1" y2="1"><stop offset="0" stop-color="#ececec"/><stop offset="1" stop-color="#fff"/></linearGradient></defs>
<rect x="84" y="142" width="624" height="455" fill="url(#g)"/><g fill="none">${grid()}</g>
${poly('380,281 392,285 392,302 380,302','#c4c4c4')}${poly('392,286 516,197 516,274 500,284 470,300 392,305','#747472')}${poly('380,281 504,193.5 516,197 392,286','#7f7f7f')}
${poly('475,319 480,318 480,356 475,357','#bdbdbd')}${poly('470,261 504,296 482,294 480,317 475,318 470,290','#56565a')}${poly('470,261 475,259 508,293 503,297','#7e7e80')}
${poly('510,285 518,292 513,294 510,291','#4c4c4e')}${poly('481,292 485,291 492,297 518,292 510,285 515,282 525,293 489,300','#808082')}${poly('481,292 489,300 489,376 481,369','#515153')}${poly('489,300 525,293 525,369 489,376','#bababa')}
${poly('341,302 472,276 474,278 344,305','#666')}${poly('341,302 344,305 344,456 341,453','#3b3b3b')}${poly('344,305 474,278 474,430 344,456','#b9b9b9')}
${poly('166,409 192,404 204,417 178,422','#4e5058',1.6)}${poly('166,409 178,422 178,472 166,461','#3f4148',1.6)}${poly('178,422 204,417 204,467 178,472','#8798ac',1.6)}
<path d="M525 369 580 359" stroke="#2b2b58" stroke-width="1.200"/><path d="M304 520 436 493" stroke="#cfcfd0" stroke-width="1.800"/>
<rect x="101" y="150" width="24" height="32" rx="8" fill="url(#k)" stroke="#ddd" stroke-width=".8"/><circle cx="107.500" cy="157.500" r="4.300" fill="#fff" stroke="#ea7a5f" stroke-width="1.600"/>
${key(132,52,'shift',32)}${key(190,41,'ctrl',24)}${key(236,41,'alt',19)}${key(282,33)}
<g fill="#e0e8f0"><path d="M617 159H634.500L625.500 150ZM551 225 559.500 216.500V233.500ZM700.500 225 691 216V234ZM617 291H634.500L625.500 300Z"/>
<path d="M603 157V161.500Q589 166 580 175L581 180 571 182 571 173 575 173Q586 161 603 157ZM647 157V161.500Q661 166 670 175L669 180 679 182 679 173 675 173Q664 161 647 157Z"/></g>
<path d="M587 201 595 191 637 187 659 194 667 201 669.500 213 668 247 662 256 652 263 620 270.500 607 269 600 262 591 240Z" fill="#dfe7ed"/>
<path d="M596 192 637 187.500 657 200 617 205 610 206 598 193Z" fill="#fdfdfe"/><path d="M589 204 600 222 600 260 591 240Z" fill="#fdfdfe"/><path d="M614 222Q614 220 619 219L657 211Q663 211 663 216L662 247 656 256 622 267Q614 268 614 262Z" fill="#fdfdfe"/><circle cx="607.500" cy="215" r="9.500" fill="#fff"/><path d="M662 199 667 203 669 211 662 207Z" fill="#fff"/>
<path d="M637.500 200V224" stroke="#b8b0ac" stroke-width="2"/><path d="M637.500 204V220" stroke="#35355a"/><path d="M640 234 657 251" stroke="#c8c2bf" stroke-width="1.800"/>
<text x="0" y="0" transform="matrix(.98 -.17 0 1 621 249.500)" font-family="Liberation Sans,sans-serif" font-size="17" textLength="37" fill="#000">Right</text>
<path d="M620 194 626 193 631 197M621 198 626 198M624 200 630 197M592 221 594 226M596 234 600 239" stroke="#111" stroke-width="1.800" stroke-dasharray="3 1"/>
<path d="M602 238.500 613 236" stroke="#109a20" stroke-width="1.600"/><path d="M613 236 629 232" stroke="#a7e0a7" stroke-width="1.500"/><path d="M585.500 191 590.500 240" stroke="#1818d8" stroke-width="1.500"/><path d="M584 182H589L584 187.500H589" fill="none" stroke="#1a1ac8"/><path d="M591.500 241 607 276" stroke="#e01616" stroke-width="1.500"/><path d="M607 278 612 284M612 278 607 284" stroke="#e01616"/>
<path d="M651 275 662 271.500 674 275 672 291 660 294 652 291Z" fill="#efefef"/><path d="M651 275 662 279 661 294 652 291Z" fill="#c9c9c9"/><path d="M662 279 674 275 673 290 661 294Z" fill="#dcdcdc"/><path d="M679 279H692L685.500 286Z" fill="#3a3a42"/>
<path d="M685.500 558V574" stroke="#2c2ca0" stroke-width="2.200"/><path d="M686 574 698 572" stroke="#208c28" stroke-width="2.200"/><path d="M686 575 692 582" stroke="#b02020" stroke-width="3"/>
<g font-family="Liberation Sans,sans-serif" font-size="10" fill="#0a0a0a"><text x="687" y="559">Z</text><text x="700" y="572">Y</text><text x="695" y="584">X</text></g></svg>`);

define('fc-doctabs',`:host{display:block;height:40px;border-top:1px solid #fff}.bar{border-top:1px solid #b0adaa;height:38px}.tab{display:flex;align-items:center;gap:3px;width:163px;height:29px;box-sizing:border-box;padding-left:11px;border:1px solid #b0adaa;border-top:0;border-radius:0 0 3px 3px;background:#f9f8f5;margin-top:-1px}::slotted(fc-icon:last-child){margin-left:4px}
 .dots{width:15px;height:2px;margin:3px 0 0 464px;background:radial-gradient(circle at .7px .7px,#aaa7a3 .8px,transparent .9px) 0 0/3px 2px}`,`<div class="bar"><div class="tab"><slot></slot></div><div class="dots"></div></div>`);

const ctl=`<svg width="25" height="11" viewBox="0 0 25 11"><g fill="none" stroke="#6c6a68"><rect x=".5" y=".5" width="10" height="10" rx="2"/><rect x="14.500" y=".5" width="10" height="10" rx="2"/><path d="M4.500 2.500H8.500V6.500H4.500ZM2.500 4.500H6.500V8.500H2.500Z"/><path d="M17 3 22 8M22 3 17 8" stroke-width="2"/></g></svg>`;
define('fc-combo',`:host{display:flex;flex-direction:column;height:495px;padding-left:6px}
 .title{display:flex;justify-content:space-between;align-items:center;height:21px;padding:0 2px 0 4px}
 .tabs{display:flex;align-items:flex-end;height:31px}
 .t{box-sizing:border-box;border:1px solid #b0adaa;border-bottom:0;border-radius:3px 3px 0 0;display:flex;justify-content:center;align-items:center;background:#eae6e3;width:60px;height:27px;padding-bottom:1px}
 .t.on{background:#fcfbfa;width:65px;height:30px;margin-bottom:-1px;padding-bottom:2px;z-index:1}
 .frame{box-sizing:border-box;width:310px;height:434px;border:1px solid #b0adaa;border-width:1px 1px 2px 1px;background:#faf9f6;display:flex;flex-direction:column;padding:1px 0 0 1px}
 .list{box-sizing:border-box;height:423px;border:1px solid #b0adaa;background:#fff;width:306px}
 .head{height:24px;background:#efebe7;display:flex}.head div{width:144px;box-sizing:border-box;border-bottom:1px solid #b0adaa;background:linear-gradient(#faf9f7,#eeebe7);padding-left:2px;line-height:23px}
 .dots{width:17px;height:5px;margin:1px auto 0;background:radial-gradient(circle at .7px .7px,#aaa7a3 .8px,transparent .9px) 0 0/3px 3px}`,
 `<div class="title"><fc-text w="83">Combo View</fc-text>${ctl}</div><div class="tabs"><div class="t on"><fc-text w="41">Model</fc-text></div><div class="t"><fc-text w="37">Tasks</fc-text></div></div><div class="frame"><div class="list"><div class="head"><div><fc-text w="126">Labels &amp; Attributes</fc-text></div></div><slot></slot></div><div class="dots"></div></div>`);
define('fc-row',`:host{display:flex;align-items:center;height:22px;margin-top:0}:host([dim]){color:#b9b9b9}:host([bold]){font-weight:600;color:#000}:host([dim]) .ic{opacity:.65}
 .a,.ic,slot{transform:none}.a{width:20px;display:flex;padding-bottom:3px}.d{border:5px solid transparent;border-top:6px solid #444;border-bottom:0}.r{border:5px solid transparent;border-left:6px solid #444;border-right:0;margin-left:2px}.ic{width:16px;margin-right:5px;padding-bottom:2px}::slotted(fc-text){padding-bottom:4px}`,
 e=>A(e,'i')?`<div class="a"><i class="${({down:'d',right:'r'})[A(e,'arrow')]||''}"></i></div><div class="ic">${svg(A(e,'i'),16)}</div><slot></slot>`:`<slot></slot>`,
 e=>{e.style.paddingLeft=(+A(e,'ind',0)-(A(e,'i')?0:1))+'px'});
define('fc-report',`:host{display:flex;flex-direction:column;height:90px;padding:0}.title{display:flex;justify-content:space-between;align-items:center;height:20px;padding:0 2px 3px 4px;box-sizing:border-box}
 .body{display:flex;height:70px;border:1px solid #b0adaa;box-sizing:border-box;background:#fff;width:940px}.txt{flex:1;display:flex;flex-direction:column;padding:2px 0 0 4px;font:13px/16px "Noto Serif","Liberation Serif",serif;word-spacing:3.500px}
 .bar{width:14px;display:flex;flex-direction:column;border-left:1px solid #b0adaa;background:#f7f5f2}.b{height:13px;display:flex;align-items:center;justify-content:center}.th{height:12px;background:#e2dfdb;border:solid #b0adaa;border-width:1px 0}.sp{flex:1;border-bottom:1px solid #b0adaa}
 .u{border:4px solid transparent;border-bottom:5px solid #444;border-top:0}.d{border:4px solid transparent;border-top:5px solid #444;border-bottom:0}`,
 `<div class="title"><fc-text w="78">Report view</fc-text>${ctl}</div><div class="body"><div class="txt"><slot></slot></div><div class="bar"><div class="b"><i class="u"></i></div><div class="th"></div><div class="sp"></div><div class="b"><i class="d"></i></div></div></div>`);
define('fc-sbtn',`:host{display:flex;width:27px;height:24px;margin-right:2px;align-items:center;justify-content:center;border:1px solid #aaa7a4;border-radius:3px;background:#dcd9d6;flex:none}`,e=>svg(A(e,'i'),16));
define('fc-status',`:host{display:flex;align-items:center;height:41px;padding-left:6px;background:#efebe7}.size{align-self:flex-end;margin-left:auto}`,`<slot></slot><svg class="size" width="12" height="12" viewBox="0 0 12 12"><path d="M9 2.500H10M6 5.500H7M9 5.500H10M3 8.500H4M6 8.500H7M9 8.500H10M0 11.500H1M3 11.500H4M6 11.500H7M9 11.500H10" stroke="#a5a29f"/></svg>`);
/* Text run whose tracking is set so that it takes a given width; defined last, once every ancestor has set its font */
define('fc-text',`:host{display:inline-block;flex:none;white-space:pre}span{display:inline-block;white-space:pre}`,`<span><slot></slot></span>`,(e,r)=>{
  const s=r.querySelector('span'),w=+A(e,'w',0);if(!w)return;
  e.style.width=w+'px';
  const n=e.textContent.length,m=s.getBoundingClientRect().width;
  s.style.letterSpacing=((w-m)/n).toFixed(3)+'px';
});
</script>
</body>
</html>
